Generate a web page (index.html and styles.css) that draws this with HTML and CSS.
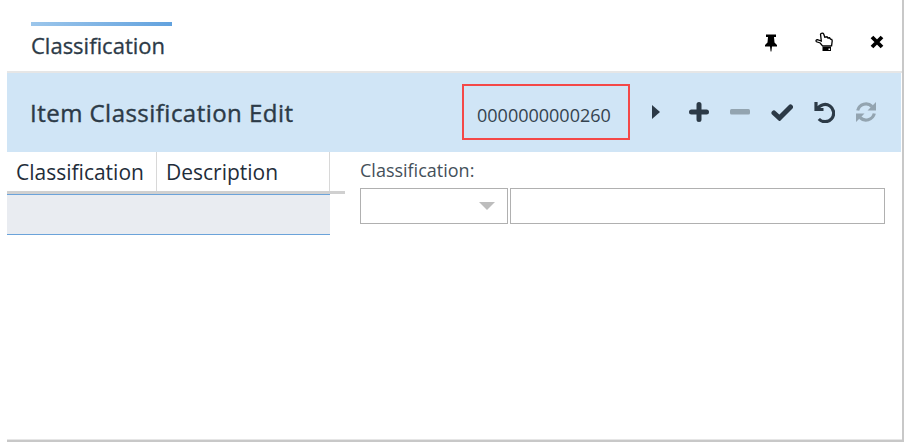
FILE: index.html
```html
<!DOCTYPE html>
<html lang="en">
<head>
  <meta charset="UTF-8" />
  <title>Classification</title>
  <link rel="stylesheet" href="styles.css">
</head>
<body>
  <div class="window">
    <div class="panel">
      <div class="top">
        <div class="tab">
          <div class="tab-bar"></div>
          <div class="tab-title">Classification</div>
        </div>
        <div class="top-icons">
          <svg class="ico-pin" width="14" height="20" viewBox="0 0 14 20"><path fill="#000" d="M2 2.500h10v2.500h-2l.5 5.500 2.500 2.500v1.500H8l-.6 5h-.8L6 14.500H1V13l2.500-2.500L4 5H2z"/></svg>
          <svg class="ico-hand" width="18" height="20" viewBox="0 0 18 20"><path fill="#fff" stroke="#000" stroke-width="1.300" d="M5.500 2.200c.5-1.300 2.700-1.500 3.300 0l1 3 2.200-.4 .9 1.200 1.700-.2 .9 1.300 1.200.3 .5 1.500-.6 5H7.500L5.200 11 1.500 9.800c-1-1-.3-2.300 1-2.200L6.300 9z"/><path fill="#000" d="M7.500 14.500h8.500V19H7.500z"/><path fill="#fff" d="M13.500 16.500H15V18h-1.500z"/></svg>
          <svg class="ico-close" width="14" height="14" viewBox="0 0 14 14"><path stroke="#000" stroke-width="3.800" d="M2 2l10 10M12 2L2 12"/></svg>
        </div>
      </div>

      <div class="band">
        <h1 class="band-title">Item Classification Edit</h1>
        <div class="code-box">0000000000260</div>
        <div class="tools">
          <svg class="tool-play" width="9" height="14" viewBox="0 0 9 14"><path fill="#2c3a47" d="M0 0l8 7-8 7z"/></svg>
          <svg class="tool-add" width="20" height="20" viewBox="0 0 20 20"><path stroke="#2c3a47" stroke-width="5" stroke-linecap="round" d="M10 2.500v15M2.500 10h15" /></svg>
          <svg class="tool-minus" width="20" height="6" viewBox="0 0 20 6"><rect width="20" height="5.500" rx="1.500" fill="#93a4b0"/></svg>
          <svg class="tool-check" width="22" height="17" viewBox="0 0 22 17"><path fill="none" stroke="#2c3a47" stroke-width="5" stroke-linecap="round" d="M3 9l5.500 5L19.500 3"/></svg>
          <svg class="tool-undo" width="21" height="22" viewBox="0 0 21 22"><path fill="none" stroke="#2c3a47" stroke-width="3.200" d="M2 1v7.500h7.500M3.500 8a8.600 8.600 0 1 1 1.300 10"/></svg>
          <svg class="tool-redo" width="22" height="22" viewBox="0 0 22 22"><path fill="none" stroke="#93a4b0" stroke-width="3.200" d="M2.700 9.500A8.500 8.500 0 0 1 17 5.500M19.300 12.500A8.500 8.500 0 0 1 5 16.500"/><path fill="#93a4b0" d="M21 1v8.500h-8.500zM1 21v-8.500h8.500z"/></svg>
        </div>
      </div>

      <div class="body">
        <div class="grid">
          <div class="grid-head">
            <div class="col col-class">Classification</div>
            <div class="col col-desc">Description</div>
          </div>
          <div class="grid-row"></div>
        </div>
        <div class="form">
          <label class="form-label">Classification:</label>
          <div class="form-fields">
            <div class="select"><span class="caret"></span></div>
            <div class="input"></div>
          </div>
        </div>
      </div>
    </div>
  </div>
</body>
</html>
```

FILE: styles.css
```css
html, body { margin: 0; padding: 0; height: 100%; background: #fff; }
body { font-family: "Open Sans", sans-serif; color: #2c3a47; overflow: hidden; }
.window { box-sizing: border-box; width: 897px; height: 442px; margin-left: 7px; border-right: 2px solid #c8c8c8; border-bottom: 2px solid #c8c8c8; }
.panel { box-sizing: border-box; height: 440px; border-bottom: 1px solid #e6e6e6; }

.top { display: flex; justify-content: space-between; height: 71px; border-bottom: 2px solid #e6e6e6; }
.tab { margin: 22px 0 0 24px; width: 141px; }
.tab-bar { height: 4px; background: linear-gradient(to right, #9cc6eb, #62a2de); }
.tab-title { font-size: 22px; font-weight: 500; line-height: 30px; margin-top: 4px; -webkit-text-stroke: 0.3px #2c3a47; }
.top-icons { display: flex; align-items: center; padding-top: 13px; margin-right: 18px; }
.ico-hand { margin-left: 37px; }
.ico-close { margin-left: 37px; }

.band { display: flex; align-items: center; height: 79px; padding-bottom: 1px; box-sizing: border-box; background: #d0e5f6; margin-right: 1px; }
.band-title { margin: 0 0 0 23px; font-size: 24px; font-weight: 400; letter-spacing: 0.47px; -webkit-text-stroke: 0.4px #2c3a47; width: 432px; }
.code-box { box-sizing: border-box; width: 168px; height: 56px; border: 2px solid #f44848; font-size: 18px; padding: 16px 0 0 13px; line-height: 26px; color: #34434f; }
.tools { display: flex; align-items: center; margin-left: 22px; }
.tool-add { margin-left: 28px; }
.tool-minus { margin-left: 21px; }
.tool-check { margin-left: 21px; }
.tool-undo { margin-left: 21px; }
.tool-redo { margin-left: 20px; }

.body { display: flex; }
.grid { width: 338px; }
.grid-head { display: flex; height: 39px; border-bottom: 3px solid #d0d0d0; }
.col { font-size: 21px; line-height: 41px; border-right: 1px solid #d8d8d8; box-sizing: border-box; height: 39px; color: #1f2d3a; }
.col-class { width: 150px; padding-left: 9px; }
.col-desc { width: 173px; padding-left: 9px; }
.grid-row { box-sizing: border-box; width: 323px; height: 41px; background: #e9ecf1; border-top: 1px solid #6ba3da; border-bottom: 1px solid #6ba3da; }

.form { padding: 7px 0 0 15px; }
.form-label { display: block; font-size: 18px; line-height: 23px; color: #44505a; }
.form-fields { display: flex; gap: 2px; margin-top: 6px; }
.select, .input { box-sizing: border-box; height: 36px; border: 1px solid #b0b0b0; background: #fff; }
.select { position: relative; width: 148px; }
.input { width: 375px; }
.caret { position: absolute; right: 12px; top: 13px; width: 0; height: 0; border-left: 8px solid transparent; border-right: 8px solid transparent; border-top: 8px solid #bdbdbd; }
```
